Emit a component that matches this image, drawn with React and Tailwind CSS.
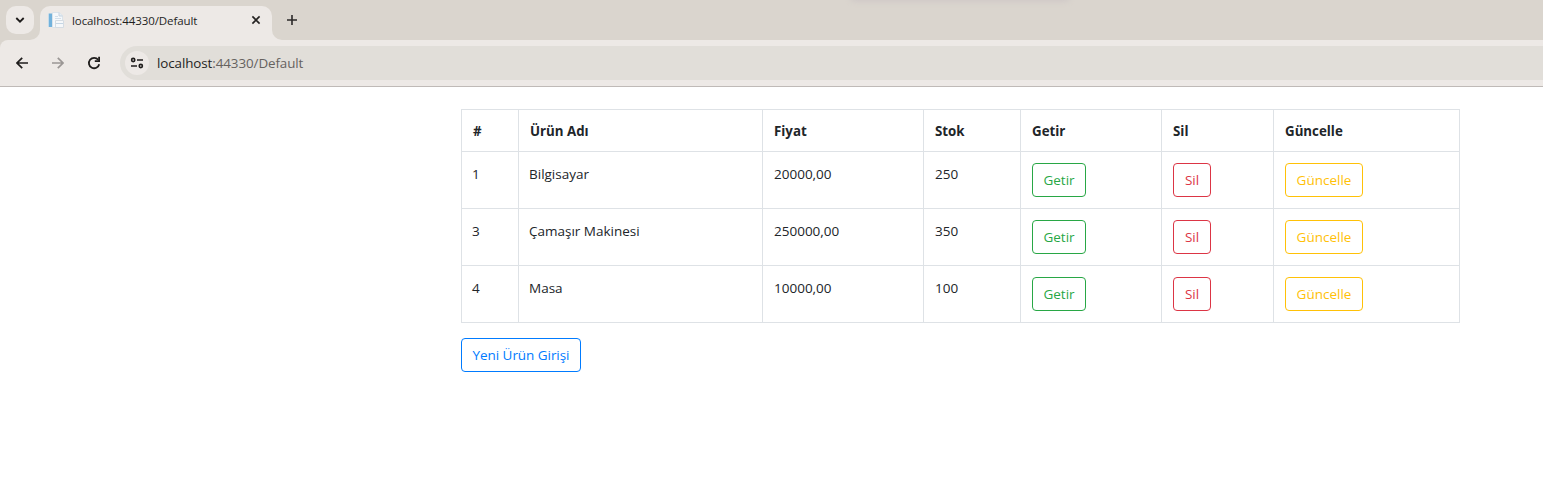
const columns = ["#", "Ürün Adı", "Fiyat", "Stok", "Getir", "Sil", "Güncelle"];

const products = [
  { id: 1, name: "Bilgisayar", price: "20000,00", stock: 250 },
  { id: 3, name: "Çamaşır Makinesi", price: "250000,00", stock: 350 },
  { id: 4, name: "Masa", price: "10000,00", stock: 100 },
];

function OutlineButton({ className, children }) {
  return (
    <button
      className={`flex h-[34px] items-center justify-center rounded-[4px] border pb-px whitespace-nowrap ${className}`}
    >
      {children}
    </button>
  );
}

function Cell({ children, className = "pl-[11px]" }) {
  return (
    <div className={`border-r border-b border-[#dee2e6] whitespace-nowrap ${className}`}>
      {children}
    </div>
  );
}

function Favicon() {
  return (
    <svg width="16" height="16" viewBox="0 0 16 16" className="shrink-0">
      <path d="M1 1.5H4V15H1Z" fill="#72b2dc" />
      <path d="M0 1.5H1V15H0Z" fill="#c6dceb" />
      <path d="M4.5 .5H11L14.5 3.5V15.5H4.5Z" fill="#f5f8fb" stroke="#dbe3ea" />
      <path d="M11 .5V4H14.5" fill="#e6edf4" stroke="#c6d3df" />
      <path d="M7 4.5H10M7 6.5H13" stroke="#d3dfea" />
      <path d="M7.5 8.5H15.5V15.5H7.5Z" fill="#f6f8fa" stroke="#d5dce3" />
      <path d="M8 11.5H15" stroke="#c5d6e5" />
    </svg>
  );
}

function TabStrip() {
  return (
    <div className="relative flex h-10 bg-[#dad5ce]">
      <div className="absolute -top-1.5 left-[852px] h-1.5 w-[216px] shadow-[0_0_6px_1px_#cdc6c6]" />
      <button className="mt-1.5 ml-1.5 flex h-7 w-7 items-center justify-center rounded-[10px] bg-[#ede9e6]">
        <svg width="10" height="8" viewBox="0 0 10 8" fill="none" stroke="#1d1b1a" strokeWidth="1.8">
          <path d="M1.3 2L5 5.7L8.7 2" />
        </svg>
      </button>
      <div className="relative mt-1.5 ml-1.5 flex h-[34px] w-[232px] items-center rounded-t-[10px] bg-[#ede9e6] pb-1.5 pl-2">
        <svg className="absolute bottom-0 -left-2.5" width="10" height="10" viewBox="0 0 10 10">
          <path d="M10 0V10H0A10 10 0 0 0 10 0Z" fill="#ede9e6" />
        </svg>
        <svg className="absolute -right-2.5 bottom-0" width="10" height="10" viewBox="0 0 10 10">
          <path d="M0 0V10H10A10 10 0 0 1 0 0Z" fill="#ede9e6" />
        </svg>
        <Favicon />
        <span className="mt-0.5 ml-2 w-[179px] text-[11.5px] leading-4 tracking-[-0.09px] text-[#1f1f1f]">
          localhost:44330/Default
        </span>
        <svg width="10" height="10" viewBox="0 0 10 10" stroke="#252322" strokeWidth="1.6">
          <path d="M1.4 1.4L8.6 8.6M8.6 1.4L1.4 8.6" />
        </svg>
      </div>
      <svg className="mt-[15px] ml-[15px]" width="10" height="10" viewBox="0 0 10 10" stroke="#2b2928" strokeWidth="1.6">
        <path d="M5 0V10M0 5H10" />
      </svg>
    </div>
  );
}

function Toolbar() {
  return (
    <div className="bg-[#dad5ce]">
      <div className="flex h-[47px] rounded-tl-[8px] border-b border-[#bfbab7] bg-[#ede9e6]">
        <svg className="mt-[17px] ml-4" width="12" height="12" viewBox="0 0 12 12" fill="none" stroke="#1f1d1c" strokeWidth="1.7">
          <path d="M12 6H1.3M6.2 .8L1 6L6.2 11.2" />
        </svg>
        <svg className="mt-[17px] ml-6" width="12" height="12" viewBox="0 0 12 12" fill="none" stroke="#9b9795" strokeWidth="1.7">
          <path d="M0 6H10.7M5.8 .8L11 6L5.8 11.2" />
        </svg>
        <svg className="mt-4 ml-[23px]" width="14" height="14" viewBox="0 0 14 14" fill="none" stroke="#1f1d1c" strokeWidth="1.8">
          <path d="M12.2 8.2A5.2 5.2 0 1 1 11.2 3.8" />
          <path d="M12.1 .8V5.1H7.8" />
        </svg>
        <div className="mt-1.5 ml-[19px] flex h-[34px] flex-1 items-center rounded-l-full bg-[#e1ded9] pl-[5px]">
          <div className="flex h-6 w-6 items-center justify-center rounded-full bg-[#ede9e6]">
            <svg width="14" height="12" viewBox="0 0 14 12" fill="none" stroke="#1f1d1c" strokeWidth="1.6">
              <circle cx="3.2" cy="3" r="1.6" />
              <path d="M7 3H13M1 9H7" />
              <circle cx="10.8" cy="9" r="1.6" />
            </svg>
          </div>
          <span className="ml-2 text-[13.4px] tracking-[-0.09px] text-[#66625f]">
            <span className="text-[#1f1f1f]">localhost</span>:44330/Default
          </span>
        </div>
      </div>
    </div>
  );
}

export default function App() {
  return (
    <div className="h-[500px] overflow-hidden bg-white font-['Open_Sans','Noto_Sans',sans-serif]">
      <TabStrip />
      <Toolbar />
      <main className="pt-[22px] pl-[461px] text-[13.5px] leading-[22px] text-[#212529]">
        <div className="grid w-[999px] grid-cols-[57px_244px_161px_97px_141px_112px_186px] border-t border-l border-[#dee2e6]">
          {columns.map((label) => (
            <Cell key={label} className="h-[42px] pt-2.5 pl-[11px] text-[13.3px] font-bold">
              {label}
            </Cell>
          ))}
          {products.map((product) => (
            <div key={product.id} className="col-span-7 grid h-[57px] grid-cols-subgrid">
              <Cell className="pt-[11px] pl-2.5">{product.id}</Cell>
              <Cell className="pt-[11px] pl-2.5">{product.name}</Cell>
              <Cell className="pt-[11px] pl-[11px]">{product.price}</Cell>
              <Cell className="pt-[11px] pl-[11px]">{product.stock}</Cell>
              <Cell className="pt-[11px] pl-[11px]">
                <OutlineButton className="w-[54px] border-[#28a745] text-[#28a745]">Getir</OutlineButton>
              </Cell>
              <Cell className="pt-[11px] pl-[11px]">
                <OutlineButton className="w-[38px] border-[#dc3545] text-[#dc3545]">Sil</OutlineButton>
              </Cell>
              <Cell className="pt-[11px] pl-[11px]">
                <OutlineButton className="w-[78px] border-[#ffc107] text-[#ffc107]">Güncelle</OutlineButton>
              </Cell>
            </div>
          ))}
        </div>
        <OutlineButton className="mt-[15px] w-[120px] border-[#007bff] tracking-[-0.05px] text-[#007bff]">
          Yeni Ürün Girişi
        </OutlineButton>
      </main>
    </div>
  );
}
